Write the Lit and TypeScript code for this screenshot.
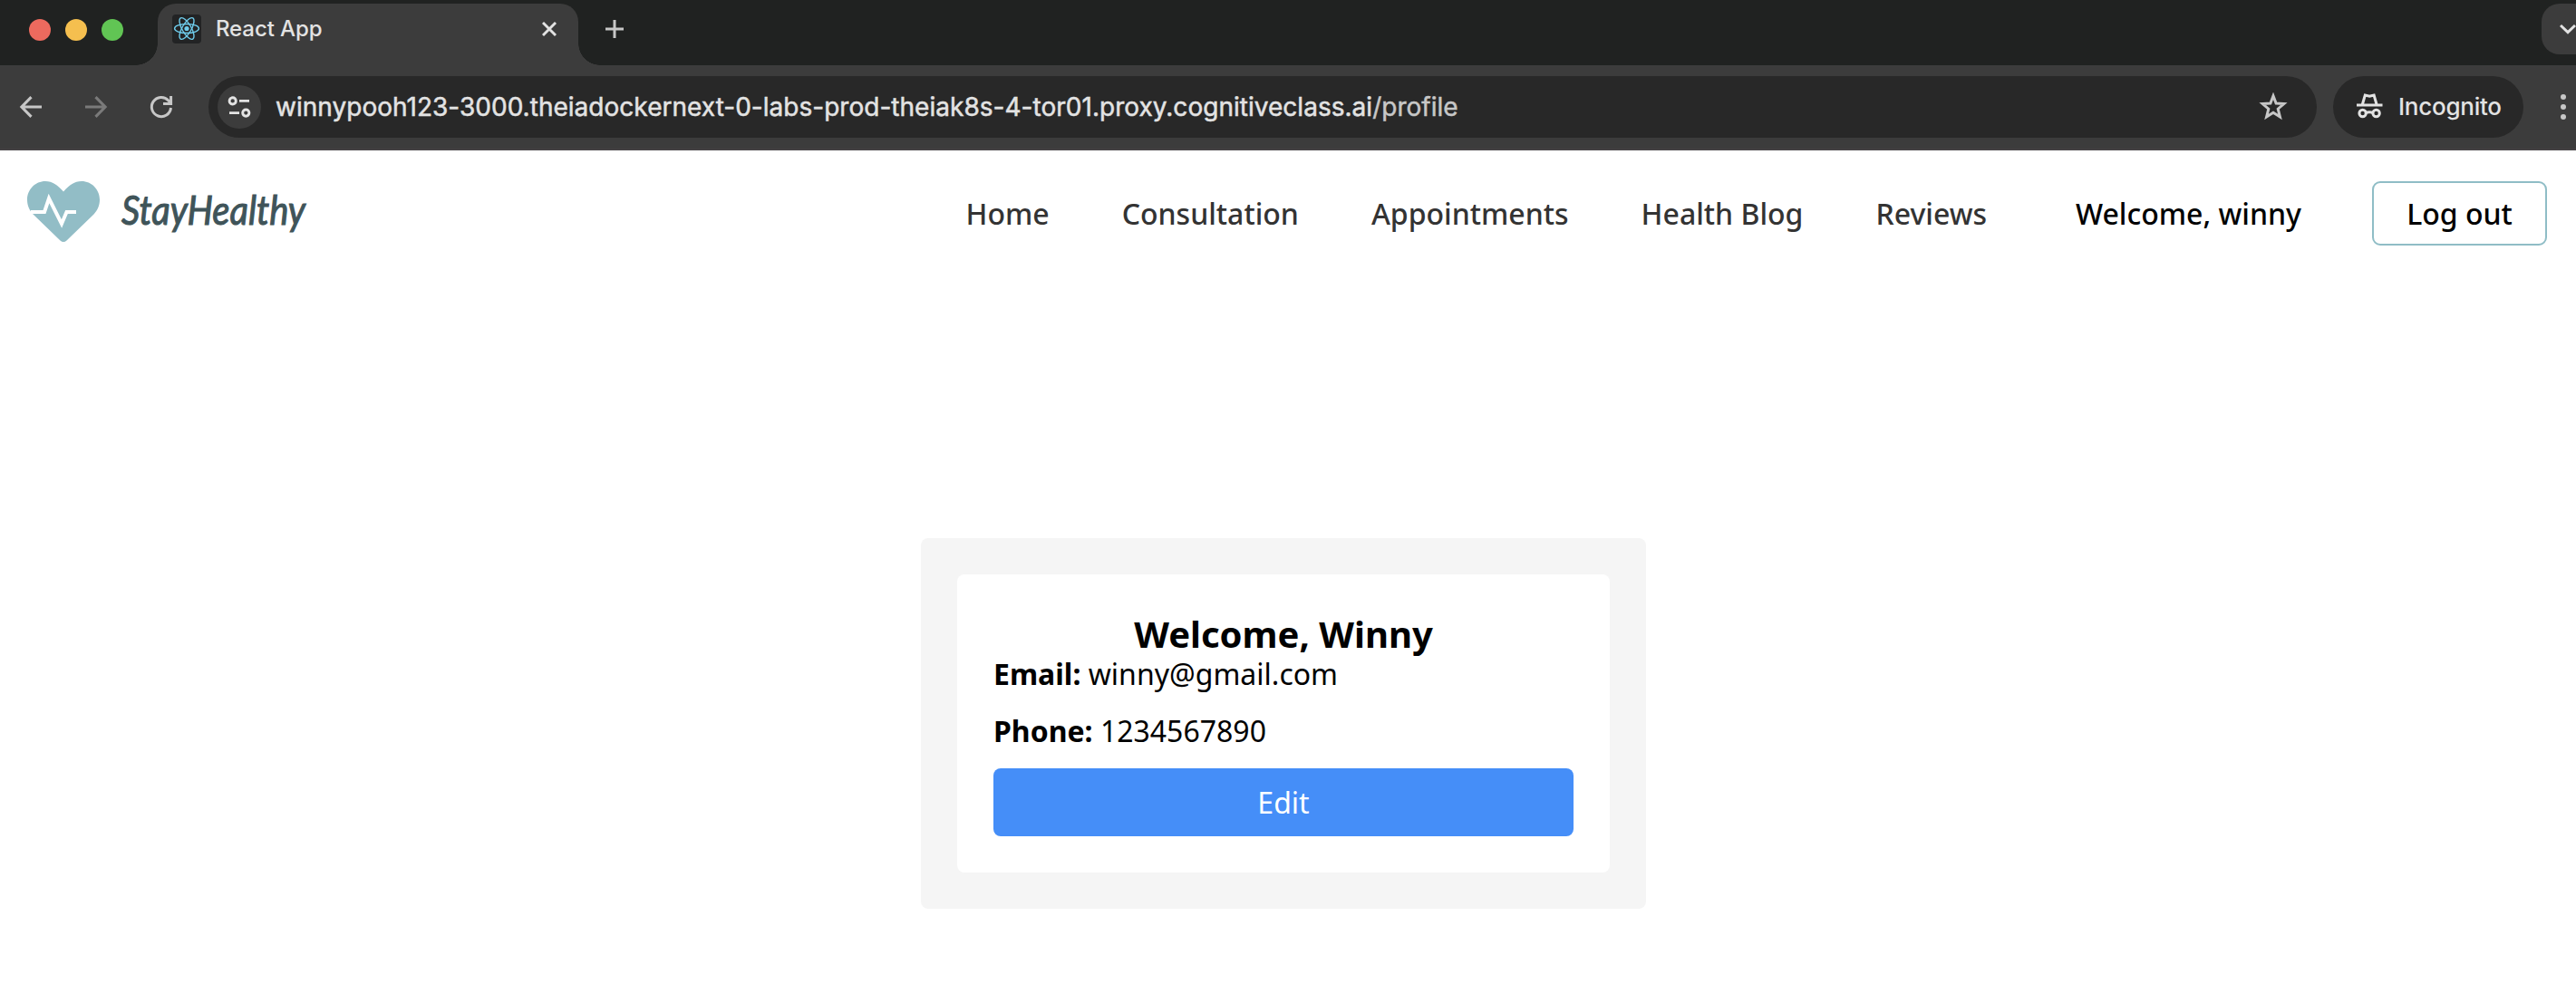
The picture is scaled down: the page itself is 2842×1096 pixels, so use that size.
import { LitElement, html, css } from "lit";
import { customElement } from "lit/decorators.js";

@customElement("browser-chrome")
class BrowserChrome extends LitElement {
  static styles = css`
    :host { display: block; font-family: Inter, "Liberation Sans", sans-serif; color: #e3e3e3; }
    svg { display: block; flex: none; }
    .strip { height: 72px; background: #202221; display: flex; align-items: flex-start; overflow: hidden; }
    .lights { display: flex; gap: 16px; padding: 21px 38px 0 32px; }
    .light { width: 24px; height: 24px; border-radius: 50%; }
    .red { background: #ed6a5e; }
    .yellow { background: #f5bf4f; }
    .green { background: #61c554; }
    .foot { align-self: flex-end; width: 24px; height: 24px; margin-left: -24px; background: radial-gradient(circle at 0 0, #202221 23.5px, #3c3c3c 24px); }
    .foot.right { margin: 0 -24px 0 0; background: radial-gradient(circle at 100% 0, #202221 23.5px, #3c3c3c 24px); }
    .tab { box-sizing: border-box; width: 464px; height: 68px; margin-top: 4px; border-radius: 20px 20px 0 0; background: #3c3c3c; display: flex; align-items: center; padding: 0 24px 12px 16px; }
    .title { margin-left: 16px; font-size: 24px; line-height: 32px; font-weight: 500; flex: 1; letter-spacing: -0.1px; }
    .plus { margin: 22px 0 0 30px; }
    .grow { flex: 1; }
    .list { width: 38px; height: 56px; margin-top: 4px; border-radius: 20px 0 0 20px; background: #3c3c3c; display: flex; align-items: center; justify-content: flex-end; }
    .bar { box-sizing: border-box; height: 94px; background: #3c3c3c; border-bottom: 2px solid #454244; display: flex; align-items: center; padding: 0 0 0 20px; }
    .bar-inner { display: flex; align-items: center; flex: 1; height: 68px; }
    .nav { display: flex; gap: 42px; width: 210px; }
    .omni { box-sizing: border-box; flex: 1; height: 68px; border-radius: 34px; background: #282828; display: flex; align-items: center; padding: 0 32px 0 10px; }
    .site { width: 48px; height: 48px; border-radius: 50%; background: #3c3c3c; display: flex; align-items: center; justify-content: center; }
    .url { flex: 1; margin-left: 16px; font-size: 28px; line-height: 40px; white-space: pre; letter-spacing: 0.025px; -webkit-text-stroke: 0.5px currentColor; }
    .path { color: #c7c7c7; }
    .incog { box-sizing: border-box; width: 210px; height: 68px; margin-left: 18px; border-radius: 34px; background: #282828; display: flex; align-items: center; padding-left: 25px; font-size: 26px; font-weight: 500; line-height: 40px; letter-spacing: -0.25px; }
    .incog span { margin-left: 17px; }
    .dots { margin-left: 38px; width: 20px; }
  `;
  render() {
    return html`
      <div class="strip">
        <div class="lights"><div class="light red"></div><div class="light yellow"></div><div class="light green"></div></div>
        <div class="foot"></div>
        <div class="tab">
          <svg width="32" height="32" viewBox="0 0 32 32" fill="none" stroke="#6fcdec" stroke-width="1.4">
            <rect width="32" height="32" rx="4" fill="#222324" stroke="none" />
            <ellipse cx="16" cy="15.5" rx="13.4" ry="5" />
            <ellipse cx="16" cy="15.5" rx="13.4" ry="5" transform="rotate(60 16 15.5)" />
            <ellipse cx="16" cy="15.5" rx="13.4" ry="5" transform="rotate(120 16 15.5)" />
            <circle cx="16" cy="15.5" r="2.6" fill="#6fcdec" stroke="none" />
          </svg>
          <div class="title">React App</div>
          <svg width="16" height="16" viewBox="0 0 16 16" stroke="#e3e3e3" stroke-width="2.9"><path d="M1 1 15 15M15 1 1 15" /></svg>
        </div>
        <div class="foot right"></div>
        <svg class="plus" width="20" height="20" viewBox="0 0 20 20" stroke="#c7c7c7" stroke-width="3"><path d="M10 0V20M0 10H20" /></svg>
        <div class="grow"></div>
        <div class="list"><svg width="18" height="12" viewBox="0 0 18 12" fill="none" stroke="#e3e3e3" stroke-width="3"><path d="M1 2 9 9.6 17 2" /></svg></div>
      </div>
      <div class="bar">
        <div class="bar-inner">
          <div class="nav">
            <svg width="30" height="28" viewBox="0 0 30 28" fill="none" stroke="#c7c7c7" stroke-width="3.1"><path d="M26 14H4M14.500 3.200 3.900 14 14.500 24.800" /></svg>
            <svg width="30" height="28" viewBox="0 0 30 28" fill="none" stroke="#7a7a7a" stroke-width="3.1"><path d="M2 14H24M13.500 3.200 24.100 14 13.500 24.800" /></svg>
            <svg width="28" height="28" viewBox="0 0 28 28" fill="none" stroke="#c7c7c7" stroke-width="3"><path d="M24.500 15A10.600 10.600 0 1 1 21.800 6.900L24 9.500M24.600 2V10.400H16" /></svg>
          </div>
          <div class="omni">
            <div class="site"><svg width="28" height="28" viewBox="0 0 28 28" fill="none" stroke="#e3e3e3" stroke-width="2.9"><circle cx="6.7" cy="7.4" r="3.6" /><path d="M14 7.400H25M3 20.600H14" /><circle cx="21.300" cy="20.600" r="3.600" /></svg></div>
            <div class="url">winnypooh123-3000.theiadockernext-0-labs-prod-theiak8s-4-tor01.proxy.cognitiveclass.ai<span class="path">/profile</span></div>
            <svg width="32" height="32" viewBox="0 0 32 32" fill="none" stroke="#c7c7c7" stroke-width="3"><path d="M16 3.800 19.100 12 27.800 12.600 21.200 18.200 23.400 27 16 22.200 8.600 27 10.800 18.200 4.200 12.600 12.900 12Z" /></svg>
          </div>
          <div class="incog">
            <svg width="30" height="30" viewBox="0 0 30 30" fill="none" stroke="#e3e3e3" stroke-width="3"><path d="M1 13H29.500M7.300 12.500 10.300 2 15.200 3.200 20.100 2 23.100 12.500" /><circle cx="7.600" cy="22" r="3.700" /><circle cx="22.600" cy="22" r="3.700" /><path d="M11 21.500Q15.100 20 19.200 21.500" /></svg>
            <span>Incognito</span>
          </div>
          <svg class="dots" width="20" height="28" viewBox="0 0 20 28" fill="#c7c7c7"><circle cx="6" cy="3" r="3" /><circle cx="6" cy="14" r="3" /><circle cx="6" cy="25" r="3" /></svg>
        </div>
      </div>`;
  }
}

const LINKS = ["Home", "Consultation", "Appointments", "Health Blog", "Reviews"];

@customElement("site-nav")
class SiteNav extends LitElement {
  static styles = css`
    :host { box-sizing: border-box; display: flex; align-items: center; height: 139px; padding: 0 32px 0 24px; font: 500 32px/44px "Noto Sans", sans-serif; color: #000; }
    .logo { display: block; flex: none; margin-bottom: 5px; overflow: visible; }
    .word { font: italic 400 44px Lato, sans-serif; fill: #3f5459; stroke: #3f5459; stroke-width: 1.1px; }
    .links { display: flex; gap: 80px; margin-left: auto; color: #333; white-space: nowrap; }
    .user { margin: 0 78px 0 98px; white-space: nowrap; }
    .logout { box-sizing: border-box; width: 193px; height: 71px; border: 2px solid #8fbdc6; border-radius: 9px; background: #fff; color: #000; font: inherit; padding: 0; }
  `;
  render() {
    return html`
      <svg class="logo" width="340" height="90" viewBox="24 188 340 90">
        <path fill="#92bdc6" d="M70 211.500C63 204 58 200 50 200C39 200 30 209 30 220.500C30 227 32.500 232 36.500 236.500L66.500 265.500Q70 268.500 73.500 265.500L103.500 236.500C107.500 232 110 227 110 220.500C110 209 101 200 90 200C82 200 77 204 70 211.500Z" />
        <path fill="none" stroke="#fff" stroke-width="4" d="M34 234H49L54 219 68 247 73.500 234H84" />
        <text class="word" x="134" y="248" textLength="203" lengthAdjust="spacingAndGlyphs">StayHealthy</text>
      </svg>
      <div class="links">${LINKS.map((l) => html`<span>${l}</span>`)}</div>
      <div class="user">Welcome, winny</div>
      <button class="logout">Log out</button>`;
  }
}

@customElement("profile-card")
class ProfileCard extends LitElement {
  static styles = css`
    :host { box-sizing: border-box; display: block; width: 800px; height: 409px; padding: 40px; background: #f5f5f5; border-radius: 8px; font: 400 32px/37px "Noto Sans", sans-serif; color: #000; }
    .card { box-sizing: border-box; height: 329px; padding: 40px; background: #fff; border-radius: 8px; }
    h1 { margin: 0; font-size: 40px; line-height: 51px; font-weight: 700; text-align: center; }
    p { margin: 0 0 26px; }
    .last { margin-bottom: 23px; }
    b { font-weight: 700; }
    .edit { display: block; width: 100%; height: 75px; border: 0; padding: 0; border-radius: 8px; background: #458ef8; color: #fff; font: inherit; }
  `;
  render() {
    return html`
      <div class="card">
        <h1>Welcome, Winny</h1>
        <p><b>Email:</b> winny@gmail.com</p>
        <p class="last"><b>Phone:</b> 1234567890</p>
        <button class="edit">Edit</button>
      </div>`;
  }
}

@customElement("app-root")
class AppRoot extends LitElement {
  static styles = css`
    :host { display: block; width: 100%; height: 1096px; overflow: hidden; background: #fff; }
    .main { display: flex; justify-content: center; padding: 289px 10px 0 0; }
  `;
  render() {
    return html`<browser-chrome></browser-chrome><site-nav></site-nav><div class="main"><profile-card></profile-card></div>`;
  }
}
